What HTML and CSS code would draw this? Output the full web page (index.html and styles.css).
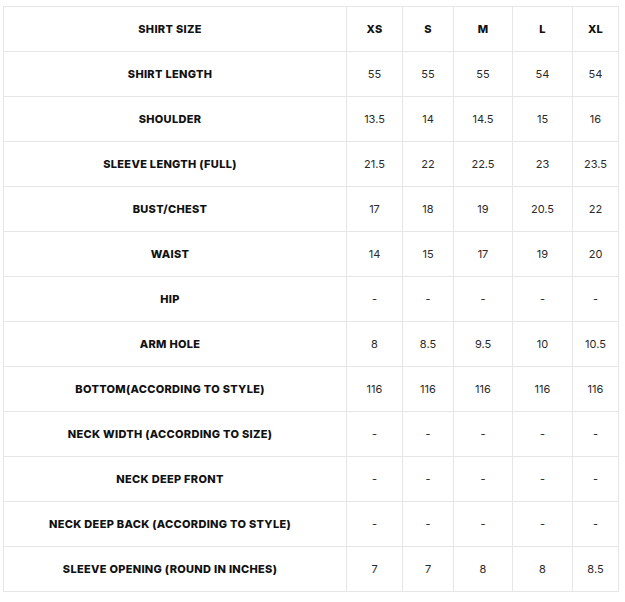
FILE: index.html
```html
<!DOCTYPE html>
<html>
<head>
<meta charset="utf-8">
<link rel="stylesheet" href="styles.css">
</head>
<body>
<table class="size-table">
  <colgroup>
    <col class="c-label"><col class="c-xs"><col class="c-s"><col class="c-m"><col class="c-l"><col class="c-xl">
  </colgroup>
  <tr class="head"><td class="label">SHIRT SIZE</td><td>XS</td><td>S</td><td>M</td><td>L</td><td>XL</td></tr>
  <tr><td class="label">SHIRT LENGTH</td><td>55</td><td>55</td><td>55</td><td>54</td><td>54</td></tr>
  <tr><td class="label">SHOULDER</td><td>13.5</td><td>14</td><td>14.5</td><td>15</td><td>16</td></tr>
  <tr><td class="label">SLEEVE LENGTH (FULL)</td><td>21.5</td><td>22</td><td>22.5</td><td>23</td><td>23.5</td></tr>
  <tr><td class="label">BUST/CHEST</td><td>17</td><td>18</td><td>19</td><td>20.5</td><td>22</td></tr>
  <tr><td class="label">WAIST</td><td>14</td><td>15</td><td>17</td><td>19</td><td>20</td></tr>
  <tr><td class="label">HIP</td><td>-</td><td>-</td><td>-</td><td>-</td><td>-</td></tr>
  <tr><td class="label">ARM HOLE</td><td>8</td><td>8.5</td><td>9.5</td><td>10</td><td>10.5</td></tr>
  <tr><td class="label">BOTTOM(ACCORDING TO STYLE)</td><td>116</td><td>116</td><td>116</td><td>116</td><td>116</td></tr>
  <tr><td class="label">NECK WIDTH (ACCORDING TO SIZE)</td><td>-</td><td>-</td><td>-</td><td>-</td><td>-</td></tr>
  <tr><td class="label">NECK DEEP FRONT</td><td>-</td><td>-</td><td>-</td><td>-</td><td>-</td></tr>
  <tr><td class="label">NECK DEEP BACK (ACCORDING TO STYLE)</td><td>-</td><td>-</td><td>-</td><td>-</td><td>-</td></tr>
  <tr><td class="label">SLEEVE OPENING (ROUND IN INCHES)</td><td>7</td><td>7</td><td>8</td><td>8</td><td>8.5</td></tr>
</table>
</body>
</html>
```

FILE: styles.css
```css
html, body {
  margin: 0;
  padding: 0;
  background: #fff;
}
body {
  padding: 6px 0 0 3px;
  font-family: Inter, "Noto Sans", sans-serif;
}
.size-table {
  border-collapse: collapse;
  table-layout: fixed;
  width: 615px;
}
.c-label { width: 343px; }
.c-xs { width: 56px; }
.c-s { width: 51px; }
.c-m { width: 59px; }
.c-l { width: 60px; }
.c-xl { width: 46px; }
.size-table td {
  border: 1px solid #e6e6e6;
  height: 44px;
  padding: 0;
  text-align: center;
  vertical-align: middle;
  font-size: 11px;
  color: #2a2a2a;
}
.size-table td.label {
  padding-right: 10px;
}
.size-table td.label,
.size-table tr.head td {
  font-weight: 800;
  color: #111;
  letter-spacing: 0.3px;
}
```
